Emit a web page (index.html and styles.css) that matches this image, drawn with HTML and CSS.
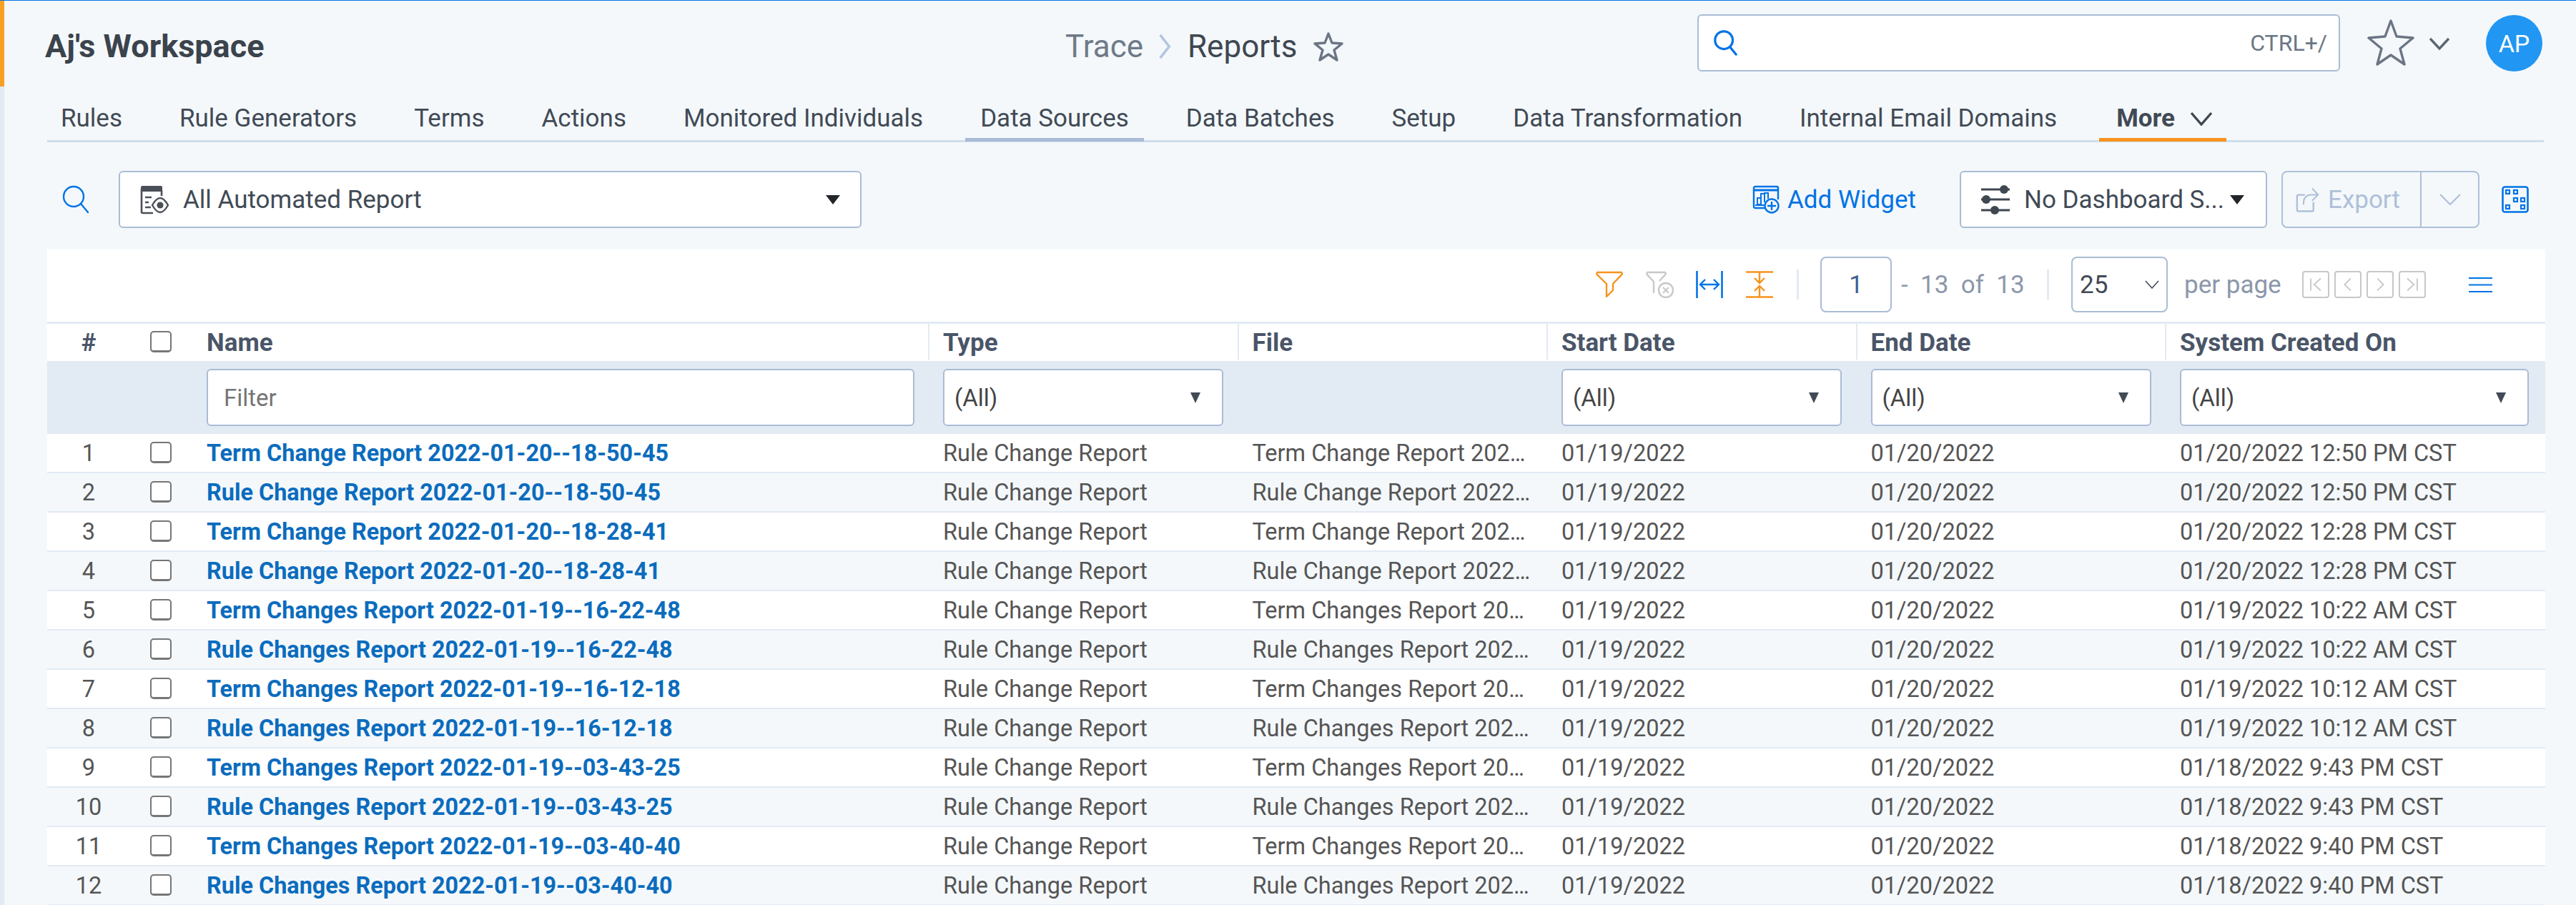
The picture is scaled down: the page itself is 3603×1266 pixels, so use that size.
FILE: index.html
```html
<!DOCTYPE html>
<html lang="en">
<head>
  <meta charset="UTF-8">
  <link rel="stylesheet" href="styles.css">
  <title>Reports</title>
</head>
<body>
<div class="page">
  <div class="rail"></div>
  <div class="main">

    <!-- top header -->
    <header class="topbar">
      <div class="workspace">Aj's Workspace</div>
      <div class="crumbs">
        <span class="crumb-parent">Trace</span>
        <svg class="crumb-sep" viewBox="0 0 20 40"><path d="M3 2l14 18L3 38" fill="none" stroke="#b4c6de" stroke-width="4"/></svg>
        <span class="crumb-current">Reports</span>
        <svg class="crumb-star" viewBox="0 0 42 42"><path d="M21 3l5 13 14 1-11 9 4 14-12-8-12 8 4-14L2 17l14-1z" fill="none" stroke="#6b7583" stroke-width="3.4" stroke-linejoin="round"/></svg>
      </div>
      <div class="searchbox">
        <svg class="icon-search" viewBox="0 0 40 40"><circle cx="17" cy="16" r="13" fill="none" stroke="#0073e6" stroke-width="3.4"/><path d="M26 26l9 11" stroke="#0073e6" stroke-width="3.4" stroke-linecap="round"/></svg>
        <span class="search-hint">CTRL+/</span>
      </div>
      <svg class="fav-star" viewBox="0 0 66 66"><path d="M33 3l8 22 23 2-18 15 6 22-19-13-19 13 6-22L2 27l23-2z" fill="none" stroke="#6b7583" stroke-width="3.4" stroke-linejoin="round"/></svg>
      <svg class="fav-chev" viewBox="0 0 30 18"><path d="M2 2l13 14L28 2" fill="none" stroke="#5c6672" stroke-width="3.4"/></svg>
      <div class="avatar">AP</div>
    </header>

    <!-- tabs -->
    <nav class="tabs">
      <a class="tab">Rules</a>
      <a class="tab">Rule Generators</a>
      <a class="tab">Terms</a>
      <a class="tab">Actions</a>
      <a class="tab">Monitored Individuals</a>
      <a class="tab tab-active">Data Sources</a>
      <a class="tab">Data Batches</a>
      <a class="tab">Setup</a>
      <a class="tab">Data Transformation</a>
      <a class="tab">Internal Email Domains</a>
      <a class="tab tab-more">More
        <svg class="more-chev" viewBox="0 0 32 20"><path d="M2 2l14 16L30 2" fill="none" stroke="#3f4750" stroke-width="3.4"/></svg>
      </a>
    </nav>

    <!-- dashboard toolbar -->
    <div class="toolbar">
      <svg class="icon-lens" viewBox="0 0 40 40"><circle cx="17" cy="16" r="14" fill="none" stroke="#0073e6" stroke-width="2.4"/><path d="M27 26l10 12" stroke="#0073e6" stroke-width="2.4" stroke-linecap="round"/></svg>
      <div class="select report-select">
        <svg class="icon-report" viewBox="0 0 42 42"><path d="M2 10h30v-6a2 2 0 0 0-2-2H4a2 2 0 0 0-2 2z" fill="#4a4f57"/><path d="M3 6v32a2 2 0 0 0 2 2h14M31 8v8" fill="none" stroke="#4a4f57" stroke-width="2.6"/><path d="M8 18h9M8 25h5M8 32h8" stroke="#4a4f57" stroke-width="2.6"/><path d="M18 29c4-7 8-10 11-10s7 3 11 10c-4 7-8 10-11 10s-7-3-11-10z" fill="#fff" stroke="#4a4f57" stroke-width="2.4"/><circle cx="29" cy="29" r="4.6" fill="#4a4f57"/></svg>
        <span class="select-text">All Automated Report</span>
        <i class="caret caret-big"></i>
      </div>
      <a class="add-widget">
        <svg class="icon-widget" viewBox="0 0 38 40"><path d="M18 32H4a2 2 0 0 1-2-2V4a2 2 0 0 1 2-2h30a2 2 0 0 1 2 2v16" fill="none" stroke="#0073e6" stroke-width="2.4"/><path d="M3 7h32" stroke="#0073e6" stroke-width="3"/><path d="M7 27v-9h5v9zM12 27V12h5v12M17 12v-1h5v8" fill="none" stroke="#0073e6" stroke-width="2"/><path d="M4 28h14" stroke="#0073e6" stroke-width="2"/><circle cx="27" cy="29" r="9.5" fill="#f4f8fb" stroke="#0073e6" stroke-width="2.4"/><path d="M27 23v12M21 29h12" stroke="#0073e6" stroke-width="2.4"/></svg>
        Add Widget
      </a>
      <div class="select dash-select">
        <svg class="icon-sliders" viewBox="0 0 42 42"><g stroke="#3f4750" stroke-width="3"><path d="M1 7h40M1 21h40M1 36h40"/></g><circle cx="33" cy="7" r="6" fill="#3f4750"/><circle cx="8" cy="21" r="6" fill="#3f4750"/><circle cx="20" cy="36" r="6" fill="#3f4750"/></svg>
        <span class="select-text">No Dashboard S...</span>
        <i class="caret caret-big"></i>
      </div>
      <div class="export">
        <div class="export-main">
          <svg class="icon-export" viewBox="0 0 36 40"><path d="M14 13H4a2 2 0 0 0-2 2v21a2 2 0 0 0 2 2h21a2 2 0 0 0 2-2V24" fill="none" stroke="#aec0d8" stroke-width="2.6" stroke-linejoin="round"/><path d="M12 28v-4a11 11 0 0 1 11-11h11M25 3l9 10-9 9" fill="none" stroke="#aec0d8" stroke-width="2.2"/></svg>
          Export
        </div>
        <div class="export-arrow">
          <svg class="export-chev" viewBox="0 0 30 16"><path d="M1 1l14 14L29 1" fill="none" stroke="#aec0d8" stroke-width="2.2"/></svg>
        </div>
      </div>
      <svg class="icon-grid" viewBox="0 0 38 38"><rect x="1.5" y="1.5" width="35" height="35" rx="3" fill="none" stroke="#0073e6" stroke-width="2.6"/><g fill="none" stroke="#0073e6" stroke-width="2.2"><rect x="6" y="6" width="5" height="5"/><rect x="17" y="6" width="5" height="5"/><rect x="17" y="17" width="5" height="5"/><rect x="27" y="17" width="5" height="5"/><rect x="6" y="27" width="5" height="5"/><rect x="27" y="27" width="5" height="5"/></g></svg>
    </div>

    <!-- report grid -->
    <section class="panel">
      <div class="pager">
        <svg class="tool" viewBox="0 0 38 38"><path d="M4 2h30a2 2 0 0 1 2 3.400L24 18v9l-9 9V18L2 5.400A2 2 0 0 1 4 2z" fill="none" stroke="#f7931e" stroke-width="2.400" stroke-linejoin="round"/></svg>
        <svg class="tool tool-clear" viewBox="0 0 39 38"><path d="M4 2h21a2 2 0 0 1 2 3.400L19 14M11 31V15L2 5.400A2 2 0 0 1 4 2" fill="none" stroke="#c8c8c8" stroke-width="2.400" stroke-linejoin="round"/><circle cx="28" cy="27" r="10" fill="#fff" stroke="#c8c8c8" stroke-width="2.400"/><path d="M24 23l8 8M32 23l-8 8" stroke="#c8c8c8" stroke-width="2"/></svg>
        <svg class="tool" viewBox="0 0 38 38"><path d="M1.500 0v38M36.500 0v38" stroke="#0073e6" stroke-width="2.600"/><path d="M7 19h24M13 12l-7 7 7 7M25 12l7 7-7 7" fill="none" stroke="#0073e6" stroke-width="2.400"/></svg>
        <svg class="tool" viewBox="0 0 38 38"><path d="M0 1.500h38M0 36.500h38" stroke="#f7931e" stroke-width="2.600"/><path d="M19 2v14M12 10l7 7 7-7M19 36V22M12 28l7-7 7 7" fill="none" stroke="#f7931e" stroke-width="2.400"/></svg>
        <span class="pager-sep"></span>
        <div class="page-input">1</div>
        <span class="page-range">- &nbsp;13 &nbsp;of &nbsp;13</span>
        <span class="pager-sep pager-sep-2"></span>
        <div class="page-size">25
          <svg class="size-chev" viewBox="0 0 20 12"><path d="M1 1l9 10 9-10" fill="none" stroke="#444c56" stroke-width="1.600"/></svg>
        </div>
        <span class="per-page">per page</span>
        <div class="page-btns">
          <span class="page-btn"><svg viewBox="0 0 26 26"><path d="M4 2v22M22 2L10 13l12 11" fill="none" stroke="#c8c8c8" stroke-width="2.400"/></svg></span>
          <span class="page-btn"><svg viewBox="0 0 26 26"><path d="M18 2L7 13l11 11" fill="none" stroke="#c8c8c8" stroke-width="2.400"/></svg></span>
          <span class="page-btn"><svg viewBox="0 0 26 26"><path d="M8 2l11 11L8 24" fill="none" stroke="#c8c8c8" stroke-width="2.400"/></svg></span>
          <span class="page-btn"><svg viewBox="0 0 26 26"><path d="M22 2v22M4 2l12 11L4 24" fill="none" stroke="#c8c8c8" stroke-width="2.400"/></svg></span>
        </div>
        <svg class="menu-lines" viewBox="0 0 33 21"><path d="M0 1h33M0 10.500h33M0 20h33" stroke="#0073e6" stroke-width="2"/></svg>
      </div>

      <table class="grid">
        <colgroup>
          <col class="c-num"><col class="c-check"><col class="c-name"><col class="c-mid"><col class="c-mid"><col class="c-mid"><col class="c-mid"><col class="c-last">
        </colgroup>
        <thead>
          <tr class="head-row">
            <th class="num">#</th>
            <th class="check"><span class="box"></span></th>
            <th>Name</th>
            <th class="sep">Type</th>
            <th class="sep">File</th>
            <th class="sep">Start Date</th>
            <th class="sep">End Date</th>
            <th class="sep">System Created On</th>
          </tr>
          <tr class="filter-row">
            <td></td>
            <td></td>
            <td><input class="filter-input" type="text" placeholder="Filter"></td>
            <td><div class="select filter-select">(All)<i class="caret caret-tall"></i></div></td>
            <td></td>
            <td><div class="select filter-select">(All)<i class="caret caret-tall"></i></div></td>
            <td><div class="select filter-select">(All)<i class="caret caret-tall"></i></div></td>
            <td><div class="select filter-select">(All)<i class="caret caret-tall"></i></div></td>
          </tr>
        </thead>
        <tbody>
          <tr><td class="num">1</td><td class="check"><span class="box"></span></td><td><a class="report-link">Term Change Report 2022-01-20--18-50-45</a></td><td>Rule Change Report</td><td class="file">Term Change Report 2022-01-20--18-50-45</td><td>01/19/2022</td><td>01/20/2022</td><td>01/20/2022 12:50 PM CST</td></tr>
          <tr><td class="num">2</td><td class="check"><span class="box"></span></td><td><a class="report-link">Rule Change Report 2022-01-20--18-50-45</a></td><td>Rule Change Report</td><td class="file">Rule Change Report 2022-01-20--18-50-45</td><td>01/19/2022</td><td>01/20/2022</td><td>01/20/2022 12:50 PM CST</td></tr>
          <tr><td class="num">3</td><td class="check"><span class="box"></span></td><td><a class="report-link">Term Change Report 2022-01-20--18-28-41</a></td><td>Rule Change Report</td><td class="file">Term Change Report 2022-01-20--18-28-41</td><td>01/19/2022</td><td>01/20/2022</td><td>01/20/2022 12:28 PM CST</td></tr>
          <tr><td class="num">4</td><td class="check"><span class="box"></span></td><td><a class="report-link">Rule Change Report 2022-01-20--18-28-41</a></td><td>Rule Change Report</td><td class="file">Rule Change Report 2022-01-20--18-28-41</td><td>01/19/2022</td><td>01/20/2022</td><td>01/20/2022 12:28 PM CST</td></tr>
          <tr><td class="num">5</td><td class="check"><span class="box"></span></td><td><a class="report-link">Term Changes Report 2022-01-19--16-22-48</a></td><td>Rule Change Report</td><td class="file">Term Changes Report 2022-01-19--16-22-48</td><td>01/19/2022</td><td>01/20/2022</td><td>01/19/2022 10:22 AM CST</td></tr>
          <tr><td class="num">6</td><td class="check"><span class="box"></span></td><td><a class="report-link">Rule Changes Report 2022-01-19--16-22-48</a></td><td>Rule Change Report</td><td class="file">Rule Changes Report 2022-01-19--16-22-48</td><td>01/19/2022</td><td>01/20/2022</td><td>01/19/2022 10:22 AM CST</td></tr>
          <tr><td class="num">7</td><td class="check"><span class="box"></span></td><td><a class="report-link">Term Changes Report 2022-01-19--16-12-18</a></td><td>Rule Change Report</td><td class="file">Term Changes Report 2022-01-19--16-12-18</td><td>01/19/2022</td><td>01/20/2022</td><td>01/19/2022 10:12 AM CST</td></tr>
          <tr><td class="num">8</td><td class="check"><span class="box"></span></td><td><a class="report-link">Rule Changes Report 2022-01-19--16-12-18</a></td><td>Rule Change Report</td><td class="file">Rule Changes Report 2022-01-19--16-12-18</td><td>01/19/2022</td><td>01/20/2022</td><td>01/19/2022 10:12 AM CST</td></tr>
          <tr><td class="num">9</td><td class="check"><span class="box"></span></td><td><a class="report-link">Term Changes Report 2022-01-19--03-43-25</a></td><td>Rule Change Report</td><td class="file">Term Changes Report 2022-01-19--03-43-25</td><td>01/19/2022</td><td>01/20/2022</td><td>01/18/2022 9:43 PM CST</td></tr>
          <tr><td class="num">10</td><td class="check"><span class="box"></span></td><td><a class="report-link">Rule Changes Report 2022-01-19--03-43-25</a></td><td>Rule Change Report</td><td class="file">Rule Changes Report 2022-01-19--03-43-25</td><td>01/19/2022</td><td>01/20/2022</td><td>01/18/2022 9:43 PM CST</td></tr>
          <tr><td class="num">11</td><td class="check"><span class="box"></span></td><td><a class="report-link">Term Changes Report 2022-01-19--03-40-40</a></td><td>Rule Change Report</td><td class="file">Term Changes Report 2022-01-19--03-40-40</td><td>01/19/2022</td><td>01/20/2022</td><td>01/18/2022 9:40 PM CST</td></tr>
          <tr><td class="num">12</td><td class="check"><span class="box"></span></td><td><a class="report-link">Rule Changes Report 2022-01-19--03-40-40</a></td><td>Rule Change Report</td><td class="file">Rule Changes Report 2022-01-19--03-40-40</td><td>01/19/2022</td><td>01/20/2022</td><td>01/18/2022 9:40 PM CST</td></tr>
        </tbody>
      </table>
    </section>
  </div>
</div>
</body>
</html>
```

FILE: styles.css
```css
html, body {
  margin: 0;
  padding: 0;
  height: 1266px;
  overflow: hidden;
}

body {
  font-family: Roboto, "Liberation Sans", sans-serif;
  font-size: 35px;
  color: #414a55;
  background: #f4f8fb;
}

.page {
  display: flex;
  height: 1266px;
  border-top: 1px solid #0073e6;
  box-sizing: border-box;
}

.rail {
  flex: 0 0 6px;
  background: #e2eaf4;
}

.rail::before {
  content: '';
  display: block;
  height: 120px;
  background: #f7a023;
}

.main {
  flex: 1;
  min-width: 0;
  padding: 0 43px 0 60px;
}

/* top header */
.topbar {
  display: flex;
  align-items: center;
  height: 119px;
  box-sizing: border-box;
}

.workspace {
  width: 1427px;
  margin: 8px 0 0 -3px;
  font-size: 45px;
  font-weight: 700;
  color: #3b434d;
}

.crumbs {
  display: flex;
  align-items: center;
  width: 884px;
  margin-top: 8px;
  font-size: 44px;
}

.crumb-parent {
  color: #6f7a88;
}

.crumb-sep {
  width: 20px;
  height: 36px;
  margin: 0 22px 0 20px;
}

.crumb-current {
  color: #3f4750;
}

.crumb-star {
  width: 42px;
  height: 42px;
  margin-left: 23px;
}

.searchbox {
  display: flex;
  align-items: center;
  justify-content: space-between;
  width: 899px;
  height: 80px;
  margin-top: -1px;
  padding: 0 16px 0 19px;
  box-sizing: border-box;
  background: #fff;
  border: 2px solid #aabcd5;
  border-radius: 6px;
}

.icon-search {
  width: 38px;
  height: 38px;
}

.search-hint {
  font-size: 32px;
  color: #6b7785;
}

.fav-star {
  width: 66px;
  height: 66px;
  margin: -4px 0 0 38px;
}

.fav-chev {
  width: 30px;
  height: 18px;
  margin: 0 0 0 20px;
}

.avatar {
  display: flex;
  align-items: center;
  justify-content: center;
  width: 79px;
  height: 79px;
  margin-left: 50px;
  border-radius: 50%;
  background: #2196f3;
  color: #fff;
  font-size: 34px;
}

/* tabs */
.tabs {
  display: flex;
  align-items: stretch;
  gap: 38px;
  height: 79px;
  margin-right: 2px;
  box-sizing: border-box;
  border-bottom: 3px solid #cfdeec;
}

.tab {
  display: flex;
  align-items: center;
  position: relative;
  padding: 15px 21px 0;
  white-space: nowrap;
}

.tab:first-child {
  margin-left: -2px;
}

.tab-active::after,
.tab-more::after {
  content: '';
  position: absolute;
  left: 0;
  right: 0;
  bottom: -2px;
  height: 5px;
  background: #a9bcd6;
}

.tab-more {
  padding: 15px 19px 0 24px;
  font-weight: 700;
  gap: 21px;
}

.tab-more::after {
  background: #f7931e;
}

.more-chev {
  width: 32px;
  height: 20px;
}

/* toolbar */
.toolbar {
  display: flex;
  align-items: center;
  height: 80px;
  margin-top: 40px;
  padding-right: 23px;
}

.icon-lens {
  width: 40px;
  height: 40px;
  margin: 0 0 0 20px;
}

.select {
  display: flex;
  align-items: center;
  background: #fff;
  border: 2px solid #aabcd5;
  border-radius: 6px;
  box-sizing: border-box;
}

.report-select {
  width: 1039px;
  height: 80px;
  margin-left: 40px;
  padding: 0 28px 0 27px;
}

.icon-report {
  width: 42px;
  height: 42px;
  margin-right: 19px;
}

.select-text {
  flex: 1;
  white-space: nowrap;
}

.caret {
  display: block;
  width: 0;
  height: 0;
  border-style: solid;
  border-color: #22262b transparent transparent;
}

.caret-big {
  border-width: 13px 10px 0;
}

.caret-tall {
  border-width: 15px 7px 0;
  border-top-color: #414a55;
  margin-left: auto;
}

.add-widget {
  display: flex;
  align-items: center;
  margin-left: auto;
  color: #0073e6;
}

.icon-widget {
  width: 38px;
  height: 40px;
  margin-right: 11px;
}

.dash-select {
  flex: 0 0 430px;
  height: 80px;
  margin-left: 61px;
  padding: 0 30px 0 27px;
}

.icon-sliders {
  width: 42px;
  height: 42px;
  margin-right: 19px;
}

.export {
  display: flex;
  flex: 0 0 277px;
  height: 80px;
  margin-left: 20px;
  box-sizing: border-box;
  border: 2px solid #aec0d8;
  border-radius: 8px;
  color: #aec0d8;
}

.export-main {
  display: flex;
  align-items: center;
  flex: 0 0 194px;
  box-sizing: border-box;
  padding-left: 18px;
  border-right: 2px solid #aec0d8;
}

.icon-export {
  width: 33px;
  height: 38px;
  margin-right: 12px;
}

.export-arrow {
  flex: 1;
  display: flex;
  align-items: center;
  justify-content: center;
}

.export-chev {
  width: 30px;
  height: 16px;
}

.icon-grid {
  flex: 0 0 38px;
  height: 38px;
  margin-left: 31px;
}

/* grid panel */
.panel {
  margin-top: 30px;
  background: #fff;
}

.pager {
  display: flex;
  align-items: center;
  justify-content: flex-end;
  height: 104px;
  box-sizing: border-box;
  padding: 0 74px 3px 0;
  border-bottom: 3px solid #e2eaf4;
}

.tool {
  width: 38px;
  height: 38px;
  margin-right: 32px;
}

.tool-clear {
  width: 39px;
  margin-right: 31px;
}

.pager-sep {
  width: 3px;
  height: 42px;
  background: #e2eaf4;
  margin: 0 30px 0 1px;
}

.pager-sep-2 {
  margin: 0 31px;
}

.page-input {
  display: flex;
  align-items: center;
  justify-content: center;
  width: 100px;
  height: 78px;
  box-sizing: border-box;
  border: 2px solid #aabcd5;
  border-radius: 8px;
  color: #3f5f8f;
}

.page-range {
  width: 173px;
  margin-left: 13px;
  color: #8c97aa;
  white-space: nowrap;
}

.page-size {
  display: flex;
  align-items: center;
  justify-content: space-between;
  width: 135px;
  height: 78px;
  box-sizing: border-box;
  padding: 0 10px;
  border: 2px solid #aabcd5;
  border-radius: 8px;
}

.size-chev {
  width: 20px;
  height: 12px;
}

.per-page {
  width: 134px;
  margin-left: 23px;
  color: #8c97aa;
  white-space: nowrap;
}

.page-btns {
  display: flex;
  gap: 7px;
  margin-left: 31px;
}

.page-btn {
  display: flex;
  align-items: center;
  justify-content: center;
  width: 38px;
  height: 38px;
  box-sizing: border-box;
  border: 2px solid #c8c8c8;
  border-radius: 4px;
}

.page-btn svg {
  width: 20px;
  height: 20px;
}

.menu-lines {
  width: 33px;
  height: 21px;
  margin-left: 60px;
}

/* table */
.grid {
  width: 100%;
  table-layout: fixed;
  border-collapse: separate;
  border-spacing: 0;
  font-size: 32.5px;
  color: #555;
}

.c-num { width: 116px; }
.c-check { width: 86px; }
.c-name { width: 1030px; }
.c-mid { width: 432.5px; }
.c-last { width: 532px; }

.grid th,
.grid td {
  padding: 0 0 0 21px;
  text-align: left;
  white-space: nowrap;
  overflow: hidden;
}

.grid .num,
.grid .check {
  padding: 0;
  text-align: center;
}

.head-row th {
  height: 52px;
  font-size: 35px;
  font-weight: 700;
  color: #4a5568;
  position: relative;
}

.head-row th.sep::before {
  content: '';
  position: absolute;
  left: 0;
  top: 0;
  bottom: 2px;
  width: 2px;
  background: #e2eaf4;
}

.filter-row td {
  height: 102px;
  background: #e2eaf3;
}

.filter-input {
  display: block;
  width: 990px;
  height: 80px;
  box-sizing: border-box;
  padding: 0 22px;
  font: inherit;
  font-size: 33px;
  background: #fff;
  border: 2px solid #aabcd5;
  border-radius: 6px;
}

.filter-input::placeholder {
  color: #757575;
}

.filter-select {
  width: 392px;
  height: 80px;
  padding: 0 30px 0 14px;
  font-size: 33px;
  color: #444;
}

.filter-row td:last-child .filter-select {
  width: 488px;
}

.box {
  display: inline-block;
  width: 30px;
  height: 30px;
  margin-top: -6px;
  box-sizing: border-box;
  vertical-align: middle;
  background: #fff;
  border: 2px solid #767676;
  border-bottom-width: 3px;
  border-radius: 5px;
}

.grid tbody td {
  height: 55px;
  box-sizing: border-box;
  border-bottom: 2px solid #e2eaf4;
}

.grid tbody tr:nth-child(even) td {
  background: #f4f8fb;
}

.report-link {
  font-size: 32.4px;
  font-weight: 700;
  color: #0b6cbd;
}

.grid td.file {
  padding-right: 20px;
  text-overflow: ellipsis;
}
```
